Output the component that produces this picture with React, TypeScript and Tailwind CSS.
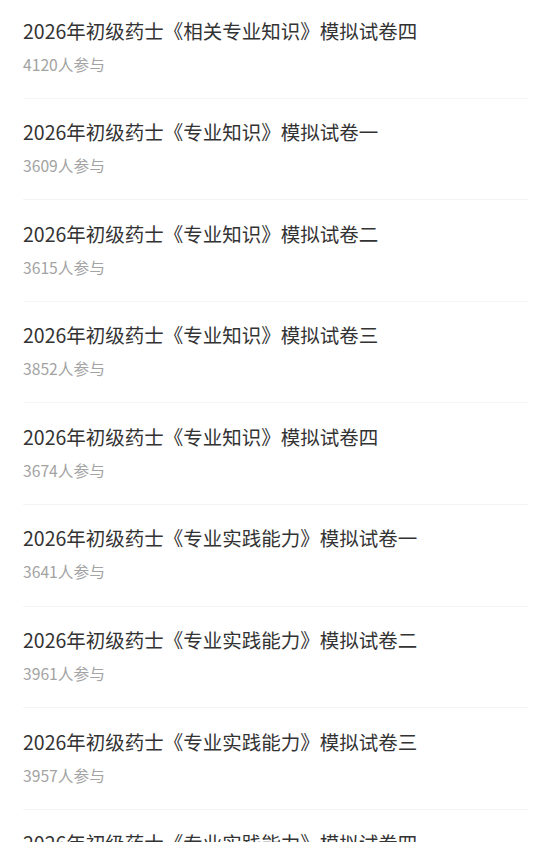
const papers = [
    { title: '2026年初级药士《相关专业知识》模拟试卷四', count: 4120 },
    { title: '2026年初级药士《专业知识》模拟试卷一', count: 3609 },
    { title: '2026年初级药士《专业知识》模拟试卷二', count: 3615 },
    { title: '2026年初级药士《专业知识》模拟试卷三', count: 3852 },
    { title: '2026年初级药士《专业知识》模拟试卷四', count: 3674 },
    { title: '2026年初级药士《专业实践能力》模拟试卷一', count: 3641 },
    { title: '2026年初级药士《专业实践能力》模拟试卷二', count: 3961 },
    { title: '2026年初级药士《专业实践能力》模拟试卷三', count: 3957 },
    { title: '2026年初级药士《专业实践能力》模拟试卷四', count: 3820 },
];

export default function App() {
    return (
        <div
            className="h-[842px] overflow-hidden bg-white"
            style={{ fontFamily: '"Noto Sans CJK SC", "Noto Sans", sans-serif' }}
        >
            <ul className="-mt-[3px] px-[23px] pr-[29px]">
                {papers.map((p) => (
                    <li key={p.title} className="h-[101.6px] pt-[19.5px] border-b border-[#f4f4f4]">
                        <div className="text-[19.5px] leading-[28px] text-[#333333] whitespace-nowrap">{p.title}</div>
                        <div className="mt-[9px] text-[15.7px] leading-[22px] text-[#a3a3a3]">{p.count}人参与</div>
                    </li>
                ))}
            </ul>
        </div>
    );
}
